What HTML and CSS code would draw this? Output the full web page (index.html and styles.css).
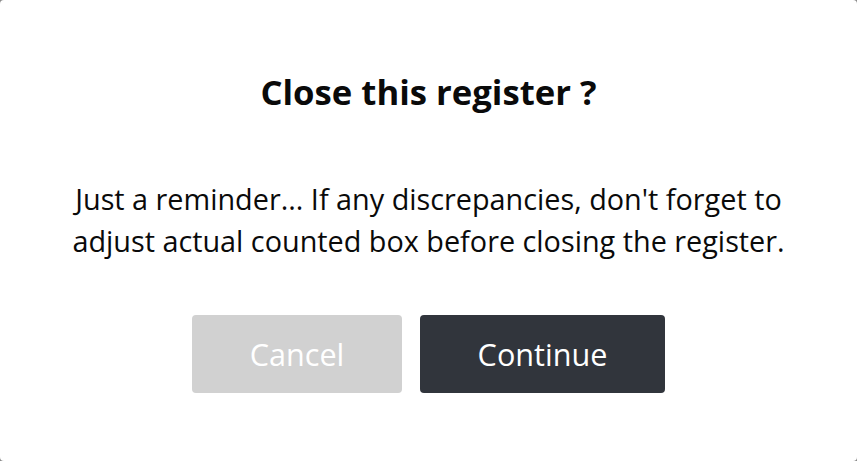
FILE: index.html
```html
<!DOCTYPE html>
<html>
<head>
<meta charset="utf-8">
<link rel="stylesheet" href="styles.css">
</head>
<body>
<div class="dialog">
  <h1 class="title">Close this register ?</h1>
  <p class="message">Just a reminder... If any discrepancies, don't forget to<br>adjust actual counted box before closing the register.</p>
  <div class="actions">
    <button class="btn btn-cancel">Cancel</button>
    <button class="btn btn-continue">Continue</button>
  </div>
</div>
</body>
</html>
```
FILE: styles.css
```css
html, body {
  margin: 0;
  padding: 0;
  width: 857px;
  height: 461px;
  background: #8a8a8a;
  overflow: hidden;
}
.dialog {
  box-sizing: border-box;
  width: 857px;
  height: 461px;
  background: #fff;
  border-radius: 4px;
  font-family: "Open Sans", sans-serif;
  display: flex;
  flex-direction: column;
  align-items: center;
  padding-top: 70px;
}
.title {
  margin: 0;
  font-size: 34.7px;
  font-weight: 700;
  line-height: 44px;
  color: #0a0a0a;
}
.message {
  margin: 64px 0 0;
  font-size: 28.8px;
  line-height: 42px;
  color: #0a0a0a;
  text-align: center;
}
.actions {
  display: flex;
  gap: 18px;
  margin-top: 53px;
}
.btn {
  height: 78px;
  border: none;
  border-radius: 4px;
  font-family: "Open Sans", sans-serif;
  font-size: 30.6px;
  color: #fff;
  padding: 0;
}
.btn-cancel {
  width: 210px;
  background: #d1d1d1;
}
.btn-continue {
  width: 245px;
  background: #31353c;
}
```
